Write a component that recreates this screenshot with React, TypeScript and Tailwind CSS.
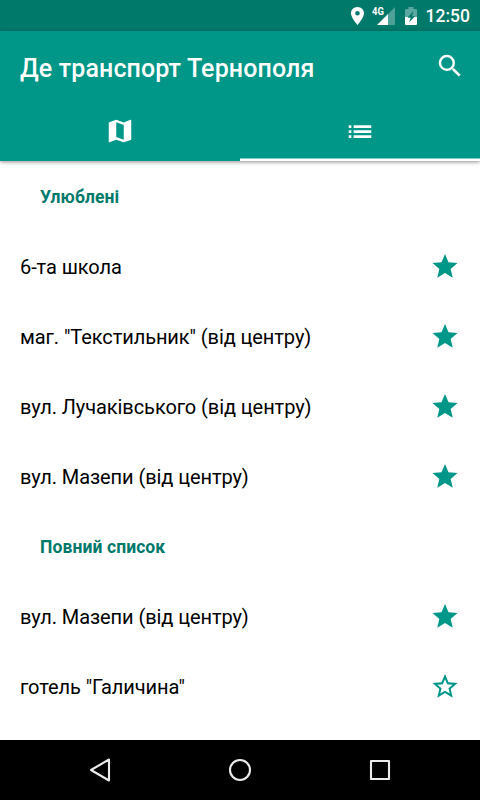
import type { ReactNode } from "react";

const favourites = [
  "6-та школа",
  'маг. "Текстильник" (від центру)',
  "вул. Лучаківського (від центру)",
  "вул. Мазепи (від центру)",
];

const allStops = [
  { name: "вул. Мазепи (від центру)", starred: true },
  { name: 'готель "Галичина"', starred: false },
];

export default function App() {
  return (
    <div className="flex h-[800px] w-[480px] flex-col overflow-hidden bg-white font-['Roboto','Noto_Sans',sans-serif]">
      <StatusBar />

      <header className="z-10 bg-[#009688] text-white shadow-[0_1px_4px_rgba(0,0,0,0.45)]">
        <div className="flex h-[70px] items-center justify-between pr-[15px] pl-5">
          <h1 className="pt-1.5 text-[25px] leading-8 font-medium tracking-[0.12px] whitespace-nowrap">
            Де транспорт Тернополя
          </h1>
          <Icon>
            <path d="M15.5 14h-.79l-.28-.27A6.471 6.471 0 0 0 16 9.5 6.5 6.5 0 1 0 9.5 16c1.61 0 3.09-.59 4.23-1.57l.27.28v.79l5 4.99L20.49 19l-4.99-5zm-6 0C7.01 14 5 11.99 5 9.5S7.01 5 9.5 5 14 7.01 14 9.5 11.99 14 9.5 14z" />
          </Icon>
        </div>
        <nav className="grid h-[60px] grid-cols-2">
          <button className="flex items-center justify-center">
            <Icon>
              <path d="M20.5 3l-.16.03L15 5.1 9 3 3.36 4.9c-.21.07-.36.25-.36.48V20.5c0 .28.22.5.5.5l.16-.03L9 18.9l6 2.1 5.64-1.9c.21-.07.36-.25.36-.48V3.5c0-.28-.22-.5-.5-.5zM15 19l-6-2.11V5l6 2.11V19z" />
            </Icon>
          </button>
          <button className="flex items-center justify-center shadow-[inset_0_-2.5px_0_#fff]">
            <Icon>
              <path d="M3 13.5h2.1v-2.1H3zm0 4h2.1v-2.1H3zm0-8h2.1V7.4H3zm3.9 4H21v-2.1H6.9zm0 4H21v-2.1H6.9zm0-10.1v2.1H21V7.4z" />
            </Icon>
          </button>
        </nav>
      </header>

      <main className="flex-1 overflow-hidden pt-px">
        <SectionTitle>Улюблені</SectionTitle>
        {favourites.map((name) => (
          <StopRow key={name} name={name} starred />
        ))}
        <SectionTitle>Повний список</SectionTitle>
        {allStops.map((stop) => (
          <StopRow key={stop.name} name={stop.name} starred={stop.starred} />
        ))}
      </main>

      <NavigationBar />
    </div>
  );
}

function StatusBar() {
  return (
    <div className="flex h-[31px] shrink-0 items-center justify-end bg-[#00796b] pr-2.5 text-white">
      <svg className="mr-2 h-[18px] w-[13px]" viewBox="0 0 14 20" preserveAspectRatio="none" fill="currentColor">
        <path d="M7 0C3.13 0 0 3.13 0 7c0 5.25 7 13 7 13s7-7.75 7-13c0-3.87-3.13-7-7-7zm0 9.5a2.5 2.5 0 1 1 0-5 2.5 2.5 0 0 1 0 5z" />
      </svg>
      <div className="relative mr-2.5 h-[18px] w-[23px]">
        <svg className="h-full w-full" viewBox="0 0 23 18" fill="currentColor">
          <path d="M16 7l7-7v18h-7z" opacity=".3" />
          <path d="M5 18L16 7v11z" />
          {/* clears the corner behind the network label */}
          <path d="M0 0h13v9.5H0z" fill="#00796b" />
        </svg>
        <span className="absolute top-0 left-0 origin-left scale-x-[0.82] text-[11.5px] leading-[9px] font-bold">
          4G
        </span>
      </div>
      <svg className="mr-[9px] h-[18px] w-[12px]" viewBox="0 0 12 18" fill="currentColor">
        <path d="M3.5 0h5v2H11q1 0 1 1v7H0V3q0-1 1-1h2.5z" opacity=".35" />
        <path d="M0 10h12v7q0 1-1 1H1q-1 0-1-1z" />
        <path d="M8.5 4L2.5 10.8h3.2L4 15.5l6-6.3H7z" fill="#00796b" />
      </svg>
      <span className="pt-px text-[17.5px] leading-5 font-medium">12:50</span>
    </div>
  );
}

function SectionTitle({ children }: { children: ReactNode }) {
  return (
    <h2 className="flex h-[70px] items-center px-10 text-[17.5px] font-bold tracking-[0.1px] text-[#00796b]">
      {children}
    </h2>
  );
}

function StopRow({ name, starred }: { name: string; starred: boolean }) {
  return (
    <div className="flex h-[70px] items-center justify-between px-5 text-xl tracking-[-0.08px] text-black">
      <span>{name}</span>
      <span className="text-[#009688]">
        <Icon>
          {starred ? (
            <path d="M12 16.87L18.18 20.6l-1.64-7.03L22 8.84l-7.19-.61L12 1.6 9.19 8.23 2 8.84l5.46 4.73L5.82 20.6z" />
          ) : (
            <path d="M22 8.84l-7.19-.62L12 1.6 9.19 8.23 2 8.84l5.46 4.73L5.82 20.6 12 16.87l6.18 3.73-1.63-7.03L22 8.84zM12 15l-3.76 2.27 1-4.28-3.32-2.88 4.38-.38L12 5.7l1.71 4.04 4.38.38-3.32 2.88 1 4.28L12 15z" />
          )}
        </Icon>
      </span>
    </div>
  );
}

function Icon({ children }: { children: ReactNode }) {
  return (
    <svg className="block h-[30px] w-[30px] shrink-0" viewBox="0 0 24 24" fill="currentColor">
      {children}
    </svg>
  );
}

function NavigationBar() {
  return (
    <div className="flex h-[60px] shrink-0 items-center justify-between bg-black px-[85px] text-[#ebebeb]">
      <svg className="h-[30px] w-[30px]" viewBox="0 0 30 30" fill="none" stroke="currentColor" strokeWidth="2.1" strokeLinejoin="round">
        <path d="M24 4.5v21L6 15z" />
      </svg>
      <svg className="h-[30px] w-[30px]" viewBox="0 0 30 30" fill="none" stroke="currentColor" strokeWidth="2.1">
        <circle cx="15" cy="15" r="10" />
      </svg>
      <svg className="h-[30px] w-[30px]" viewBox="0 0 30 30" fill="none" stroke="currentColor" strokeWidth="2.1" strokeLinejoin="round">
        <path d="M6 6h18v18H6z" />
      </svg>
    </div>
  );
}
